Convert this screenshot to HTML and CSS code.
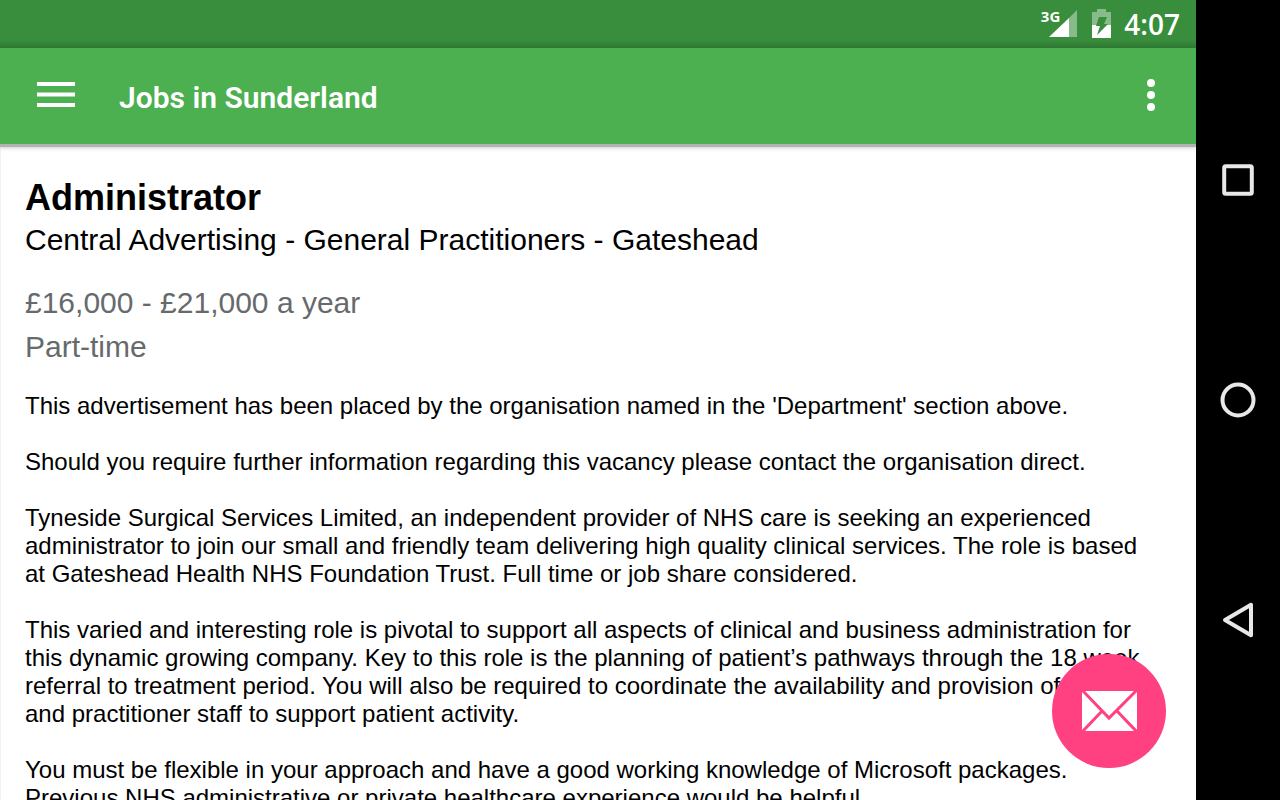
FILE: index.html
```html
<!DOCTYPE html>
<html lang="en">
<head>
<meta charset="utf-8">
<meta name="viewport" content="width=device-width, initial-scale=1">
<title>Jobs in Sunderland</title>
<link rel="stylesheet" href="styles.css">
</head>
<body>
<div class="device">
  <div class="screen">
    <div class="status-bar">
      <div class="signal">
        <span class="network">3G</span>
        <svg class="signal-icon" width="28" height="28" viewBox="0 0 28 28" aria-hidden="true">
          <path d="M28 0V27H20V8Z" fill="#fff" fill-opacity=".4"/>
          <path d="M20 8V27H0Z" fill="#fff"/>
        </svg>
      </div>
      <svg class="battery-icon" width="19" height="29" viewBox="0 0 19 29" aria-hidden="true">
        <path d="M5 0H14V3H19V16H0V3H5Z" fill="#fff" fill-opacity=".4"/>
        <path d="M0 16H19V29H0Z" fill="#fff"/>
        <path d="M7 8H15L12 15H16L5 26L8 17H4Z" fill="#388e3c"/>
      </svg>
      <time class="clock">4:07</time>
    </div>
    <header class="app-bar">
      <button class="icon-button" type="button" aria-label="Open menu">
        <svg width="38" height="26" viewBox="0 0 38 26" aria-hidden="true">
          <path d="M0 0H38V4H0ZM0 10.500H38V14.500H0ZM0 21H38V25H0Z" fill="#fff"/>
        </svg>
      </button>
      <h1 class="app-title">Jobs in Sunderland</h1>
      <button class="icon-button" type="button" aria-label="More options">
        <svg width="8" height="32" viewBox="0 0 8 32" aria-hidden="true">
          <g fill="#fff"><circle cx="4" cy="4" r="4"/><circle cx="4" cy="16" r="4"/><circle cx="4" cy="28" r="4"/></g>
        </svg>
      </button>
    </header>
    <main class="content">
      <h2 class="job-title">Administrator</h2>
      <p class="employer">Central Advertising - General Practitioners - Gateshead</p>
      <p class="fact">£16,000 - £21,000 a year</p>
      <p class="fact">Part-time</p>
      <div class="description">
        <p>This advertisement has been placed by the organisation named in the 'Department' section above.</p>
        <p>Should you require further information regarding this vacancy please contact the organisation direct.</p>
        <p>Tyneside Surgical Services Limited, an independent provider of NHS care is seeking an experienced administrator to join our small and friendly team delivering high quality clinical services. The role is based at Gateshead Health NHS Foundation Trust. Full time or job share considered.</p>
        <p>This varied and interesting role is pivotal to support all aspects of clinical and business administration for this dynamic growing company. Key to this role is the planning of patient’s pathways through the 18 week referral to treatment period. You will also be required to coordinate the availability and provision of medical and practitioner staff to support patient activity.</p>
        <p>You must be flexible in your approach and have a good working knowledge of Microsoft packages. Previous NHS administrative or private healthcare experience would be helpful.</p>
      </div>
    </main>
    <button class="fab" type="button" aria-label="Email this job">
      <svg width="56" height="40" viewBox="0 0 56 40" aria-hidden="true">
        <path d="M1 0H56V40H1Z" fill="#fff"/>
        <path d="M1 -1L28 27L56 -1M1 41L21 20M56 41L36 20" fill="none" stroke="#ff4081" stroke-width="3"/>
      </svg>
    </button>
  </div>
  <nav class="nav-bar" aria-label="System">
    <button class="nav-button" type="button" aria-label="Recent apps">
      <svg width="40" height="40" viewBox="0 0 40 40" aria-hidden="true"><rect x="6.200" y="6.200" width="27.600" height="27.600" rx="1.500" fill="none" stroke="#e8e8e8" stroke-width="4"/></svg>
    </button>
    <button class="nav-button" type="button" aria-label="Home">
      <svg width="40" height="40" viewBox="0 0 40 40" aria-hidden="true"><circle cx="20" cy="20" r="15.500" fill="none" stroke="#e8e8e8" stroke-width="4"/></svg>
    </button>
    <button class="nav-button" type="button" aria-label="Back">
      <svg width="40" height="40" viewBox="0 0 40 40" aria-hidden="true"><path d="M33 4.800V35.200L7 20Z" fill="none" stroke="#e8e8e8" stroke-width="4" stroke-linejoin="round"/></svg>
    </button>
  </nav>
</div>
</body>
</html>
```
FILE: styles.css
```css
* {
  box-sizing: border-box;
}

body,
h1,
h2,
p {
  margin: 0;
}

button {
  padding: 0;
  border: 0;
  background: none;
  cursor: pointer;
}

svg {
  display: block;
}

.device {
  display: flex;
  height: 100vh;
  overflow: hidden;
  background: #000;
}

.screen {
  position: relative;
  display: flex;
  flex: 1;
  flex-direction: column;
  min-width: 0;
  background: #fff;
}

.status-bar {
  display: flex;
  flex: none;
  align-items: center;
  justify-content: flex-end;
  height: 48px;
  padding-right: 16px;
  background: linear-gradient(#388e3c 84%, #2f7733);
  color: #fff;
}

.signal {
  display: flex;
  position: relative;
  margin-right: 15px;
}

.network {
  position: absolute;
  right: 17px;
  top: -2px;
  font: 700 15px/16px "Open Sans", sans-serif;
}

.battery-icon {
  margin: 0 13px 2px 0;
}

.clock {
  font: 600 28px/46px "Open Sans", sans-serif;
}

.app-bar {
  display: flex;
  flex: none;
  align-items: center;
  height: 96px;
  padding: 0 21px 2px 32px;
  background: #4caf50;
  box-shadow: 0 3px 0 #b3b1b3, 0 4px 4px rgba(0, 0, 0, .2);
  z-index: 1;
}

.icon-button {
  display: flex;
  align-items: center;
  justify-content: center;
  width: 48px;
  height: 48px;
}

.app-title {
  flex: 1;
  padding: 5px 0 0 39px;
  color: #fff;
  font: 600 30px/40px Roboto, sans-serif;
}

.content {
  flex: 1;
  min-height: 0;
  overflow: hidden;
  padding: 32px 36px 0 24px;
  border-left: 1px solid #f2f2f2;
  color: #000;
  font-family: "Liberation Sans", Arial, sans-serif;
}

.job-title {
  font-size: 36px;
  line-height: 44px;
}

.employer {
  margin-bottom: 21px;
  font-size: 30px;
  line-height: 40px;
}

.fact {
  color: #666a6d;
  font-size: 30px;
  line-height: 44px;
}

.description {
  display: grid;
  gap: 28px;
  padding-top: 23px;
  font-size: 24px;
  line-height: 28px;
}

.fab {
  position: absolute;
  right: 30px;
  bottom: 32px;
  display: grid;
  place-items: center;
  width: 114px;
  height: 114px;
  border-radius: 50%;
  background: #ff4081;
}

.nav-bar {
  display: flex;
  flex: none;
  flex-direction: column;
  align-items: center;
  justify-content: center;
  gap: 140px;
  width: 84px;
}

.nav-button {
  width: 40px;
  height: 80px;
  display: grid;
  place-items: center;
}
```
